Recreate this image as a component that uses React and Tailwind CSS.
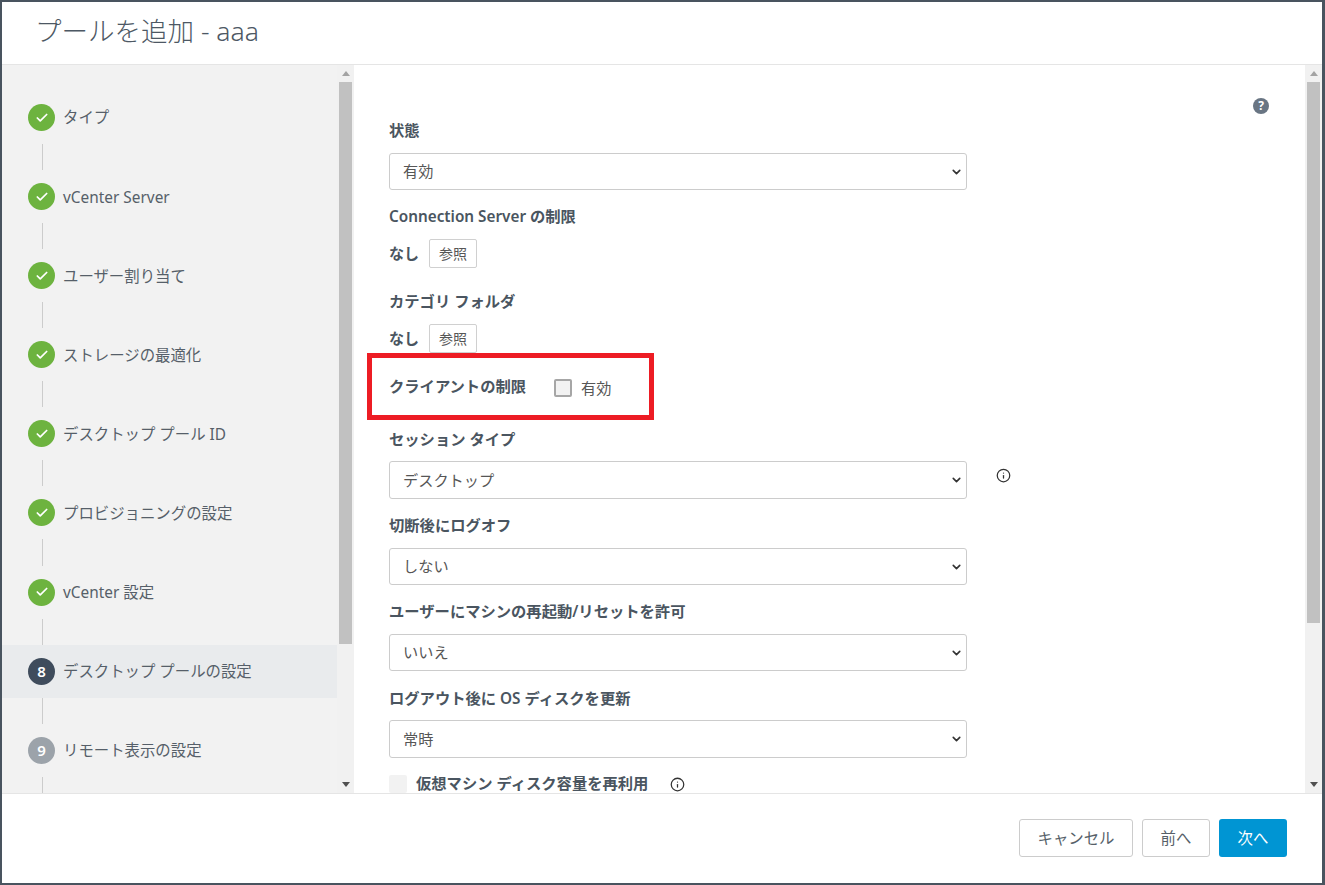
import { Check, ChevronDown, Info } from "lucide-react"

const steps = [
  { label: "タイプ", done: true },
  { label: "vCenter Server", done: true },
  { label: "ユーザー割り当て", done: true },
  { label: "ストレージの最適化", done: true },
  { label: "デスクトップ プール ID", done: true },
  { label: "プロビジョニングの設定", done: true },
  { label: "vCenter 設定", done: true },
  { label: "デスクトップ プールの設定", active: true, num: 8 },
  { label: "リモート表示の設定", num: 9 }
]

const Scrollbar = ({ thumbHeight }) => {
  return (
    <div className="w-[17px] shrink-0 flex flex-col items-center bg-[#f1f1f1]">
      <div className="h-[17px] w-full flex items-center justify-center">
        <div className="w-0 h-0 border-x-[4px] border-x-transparent border-b-[5px] border-b-[#a3a3a3]" />
      </div>
      <div className="w-[13px] bg-[#c1c1c1]" style={{ height: thumbHeight }} />
      <div className="flex-1" />
      <div className="h-[17px] w-full flex items-center justify-center">
        <div className="w-0 h-0 border-x-[4px] border-x-transparent border-t-[5px] border-t-[#505050]" />
      </div>
    </div>
  )
}

const Step = ({ step }) => {
  return (
    <div>
      <div className={`h-[53px] flex items-center pl-[26px] ${step.active ? "bg-[#e9ebed]" : ""}`}>
        {step.done ? (
          <div className="w-[27px] h-[27px] rounded-full bg-[#6db33f] flex items-center justify-center">
            <Check size={14} strokeWidth={3} className="text-white" />
          </div>
        ) : (
          <div className={`w-[27px] h-[27px] rounded-full flex items-center justify-center text-white text-[15px] font-semibold ${step.active ? "bg-[#3f4c5c]" : "bg-[#9ca3aa]"}`}>
            {step.num}
          </div>
        )}
        <span className="ml-[8px] pt-[1px] text-[15.4px] text-[#565f69]">{step.label}</span>
      </div>
      <div className="h-[26.1px] ml-[40px] w-px bg-[#cccccc]" />
    </div>
  )
}

const Label = ({ children, className = "" }) => {
  return (
    <div className={`text-[15.3px] font-semibold text-[#4a5560] ${className}`}>
      {children}
    </div>
  )
}

const Select = ({ value, className = "" }) => {
  return (
    <div className={`relative w-[578px] ${className}`}>
      <select
        defaultValue={value}
        className="w-full h-full appearance-none bg-white border border-[#cccccc] rounded-[3px] pl-[13px] text-[15.2px] text-[#565656]"
      >
        <option>{value}</option>
      </select>
      <ChevronDown size={13} strokeWidth={3} className="absolute right-[4px] top-1/2 -translate-y-1/2 text-[#333333] pointer-events-none" />
    </div>
  )
}

const Browse = () => {
  return (
    <div className="flex items-center h-[29px]">
      <span className="w-[40px] -mt-[1px] text-[15px] font-semibold text-[#4a5560]">なし</span>
      <button className="w-[48px] h-[29px] bg-white border border-[#d0d0d0] rounded-[2px] text-[14px] text-[#565656]">
        参照
      </button>
    </div>
  )
}

const App = () => {
  return (
    <div
      className="w-[1325px] h-[885px] bg-[#49545f] pt-[2px] pl-[2px] pr-[3px] pb-[2px] overflow-hidden"
      style={{ fontFamily: '"Noto Sans", "Noto Sans CJK JP", sans-serif' }}
    >
      <div className="relative w-full h-full bg-white flex flex-col">

        <div className="h-[63px] shrink-0 border-b border-[#e5e5e5] flex items-center pl-[33px] pb-[2px]">
          <h1 className="text-[26.5px] font-light text-[#4d5864]">プールを追加 - aaa</h1>
        </div>

        <div className="h-[728px] shrink-0 flex overflow-hidden">

          <div className="w-[335px] shrink-0 bg-[#f2f2f2] pt-[26px] overflow-hidden">
            {steps.map((step, index) => (
              <Step key={index} step={step} />
            ))}
          </div>
          <Scrollbar thumbHeight={562} />

          <div className="flex-1 min-w-0 relative pl-[35px] overflow-hidden">
            <div className="absolute left-[899px] top-[33px] w-[16px] h-[16px] rounded-full bg-[#697583] flex items-center justify-center text-white text-[12px] font-bold">
              ?
            </div>

            <Label className="mt-[55px] leading-[20px]">状態</Label>
            <Select value="有効" className="h-[37px] mt-[13px]" />

            <Label className="mt-[16px] leading-[20px]">Connection Server の制限</Label>
            <div className="mt-[13px]"><Browse /></div>

            <Label className="mt-[23px] leading-[20px]">カテゴリ フォルダ</Label>
            <div className="mt-[13px]"><Browse /></div>

            <div className="flex items-center mt-[25px] h-[20px]">
              <Label className="w-[165px] -mt-[4px] leading-[20px]">クライアントの制限</Label>
              <div className="w-[18px] h-[18px] bg-[#f2f2f2] border-2 border-[#a6a6a6] rounded-[2px]" />
              <span className="ml-[9px] text-[15.2px] text-[#565656]">有効</span>
            </div>

            <Label className="mt-[31px] leading-[20px]">セッション タイプ</Label>
            <div className="flex items-center mt-[12px]">
              <Select value="デスクトップ" className="h-[38px]" />
              <Info size={15} className="ml-[29px] -mt-[10px] text-[#333333]" />
            </div>

            <Label className="mt-[16px] leading-[20px]">切断後にログオフ</Label>
            <Select value="しない" className="h-[37px] mt-[13px]" />

            <Label className="mt-[16px] leading-[20px]">ユーザーにマシンの再起動/リセットを許可</Label>
            <Select value="いいえ" className="h-[37px] mt-[13px]" />

            <Label className="mt-[17px] leading-[20px]">ログアウト後に OS ディスクを更新</Label>
            <Select value="常時" className="h-[38px] mt-[12px]" />

            <div className="flex items-center mt-[17px]">
              <div className="w-[18px] h-[18px] bg-[#f2f2f2] rounded-[2px]" />
              <Label className="ml-[9px] -mt-[2px] leading-[16px]">仮想マシン ディスク容量を再利用</Label>
              <Info size={15} className="ml-[22px] text-[#333333]" />
            </div>
          </div>
          <Scrollbar thumbHeight={541} />
        </div>

        <div className="flex-1 border-t border-[#e5e5e5] flex items-start justify-end gap-[9px] pt-[25px] pr-[35px]">
          <button className="w-[114px] h-[38px] pt-[2px] bg-white border border-[#cccccc] rounded-[3px] text-[15.4px] text-[#565f69]">キャンセル</button>
          <button className="w-[68px] h-[38px] pt-[2px] bg-white border border-[#cccccc] rounded-[3px] text-[15.4px] text-[#565f69]">前へ</button>
          <button className="w-[68px] h-[38px] pt-[2px] bg-[#0095d3] rounded-[3px] text-[15.4px] text-white">次へ</button>
        </div>

        {/* annotation over the form */}
        <div className="absolute left-[365px] top-[351px] w-[287px] h-[67px] border-[5px] border-[#ed1c24] pointer-events-none" />
      </div>
    </div>
  )
}

export default App
